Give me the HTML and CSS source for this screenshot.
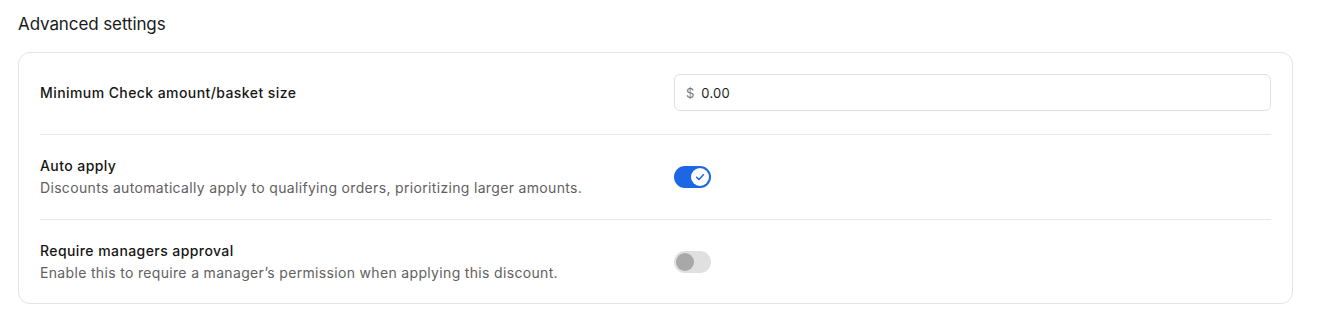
FILE: index.html
```html
<!DOCTYPE html>
<html lang="en">
<head>
<meta charset="utf-8">
<title>Advanced settings</title>
<link rel="stylesheet" href="styles.css">
</head>
<body>
<section class="settings">
  <h2 class="settings-title">Advanced settings</h2>
  <div class="card">
    <div class="row row-input">
      <div class="row-text">
        <div class="row-label">Minimum Check amount/basket size</div>
      </div>
      <div class="row-control">
        <label class="money-input">
          <span class="currency">$</span>
          <span class="value">0.00</span>
        </label>
      </div>
    </div>
    <div class="row">
      <div class="row-text">
        <div class="row-label">Auto apply</div>
        <div class="row-desc">Discounts automatically apply to qualifying orders, prioritizing larger amounts.</div>
      </div>
      <div class="row-control">
        <span class="toggle toggle-on">
          <span class="knob">
            <svg width="12" height="12" viewBox="0 0 12 12"><path d="M2.6 6.2 L5 8.4 L9.4 3.8" fill="none" stroke="#1d66e5" stroke-width="1.5" stroke-linecap="round" stroke-linejoin="round"/></svg>
          </span>
        </span>
      </div>
    </div>
    <div class="row">
      <div class="row-text">
        <div class="row-label">Require managers approval</div>
        <div class="row-desc">Enable this to require a manager’s permission when applying this discount.</div>
      </div>
      <div class="row-control">
        <span class="toggle toggle-off">
          <span class="knob"></span>
        </span>
      </div>
    </div>
  </div>
</section>
</body>
</html>
```

FILE: styles.css
```css
* { box-sizing: border-box; }

html, body {
  margin: 0;
  padding: 0;
  background: #ffffff;
}

body {
  font-family: Inter, "Noto Sans", "Liberation Sans", sans-serif;
  color: #1a1a1a;
}

.settings {
  padding: 13px 27px 0 18px;
}

.settings-title {
  margin: 0 0 16px 0;
  font-size: 17px;
  line-height: 23px;
  font-weight: 400;
  color: #1a1a1a;
  letter-spacing: -0.1px;
}

.card {
  border: 1px solid #e4e4e4;
  border-radius: 12px;
  padding: 0 21px;
}

.row {
  display: grid;
  grid-template-columns: 1fr 597px;
  align-items: center;
  padding: 20px 0 20px;
  border-bottom: 1px solid #e8e8e8;
}

.row:last-child {
  border-bottom: none;
  padding-bottom: 19px;
}

.row-input {
  padding: 21px 0 23px;
}

.row-label {
  font-size: 14px;
  line-height: 22px;
  font-weight: 500;
  color: #161616;
  letter-spacing: 0.42px;
}

.row-desc {
  font-size: 14px;
  line-height: 22px;
  font-weight: 400;
  color: #616161;
  letter-spacing: 0.33px;
}

.money-input {
  display: flex;
  align-items: center;
  height: 37px;
  border: 1px solid #e0e0e0;
  border-radius: 6px;
  padding: 0 11px;
  font-size: 13px;
  gap: 7px;
}

.currency {
  color: #777777;
}

.value {
  color: #1c1c1c;
  letter-spacing: 0.2px;
}

.toggle {
  display: inline-flex;
  align-items: center;
  width: 37px;
  height: 22px;
  border-radius: 11px;
  padding: 2px;
  vertical-align: middle;
}

.toggle-on {
  background: #1d66e5;
  justify-content: flex-end;
}

.toggle-off {
  background: #e0e0e0;
  justify-content: flex-start;
}

.knob {
  width: 18px;
  height: 18px;
  border-radius: 50%;
  display: flex;
  align-items: center;
  justify-content: center;
}

.toggle-on .knob {
  background: #ffffff;
}

.toggle-off .knob {
  background: #a8a8a8;
}
```
